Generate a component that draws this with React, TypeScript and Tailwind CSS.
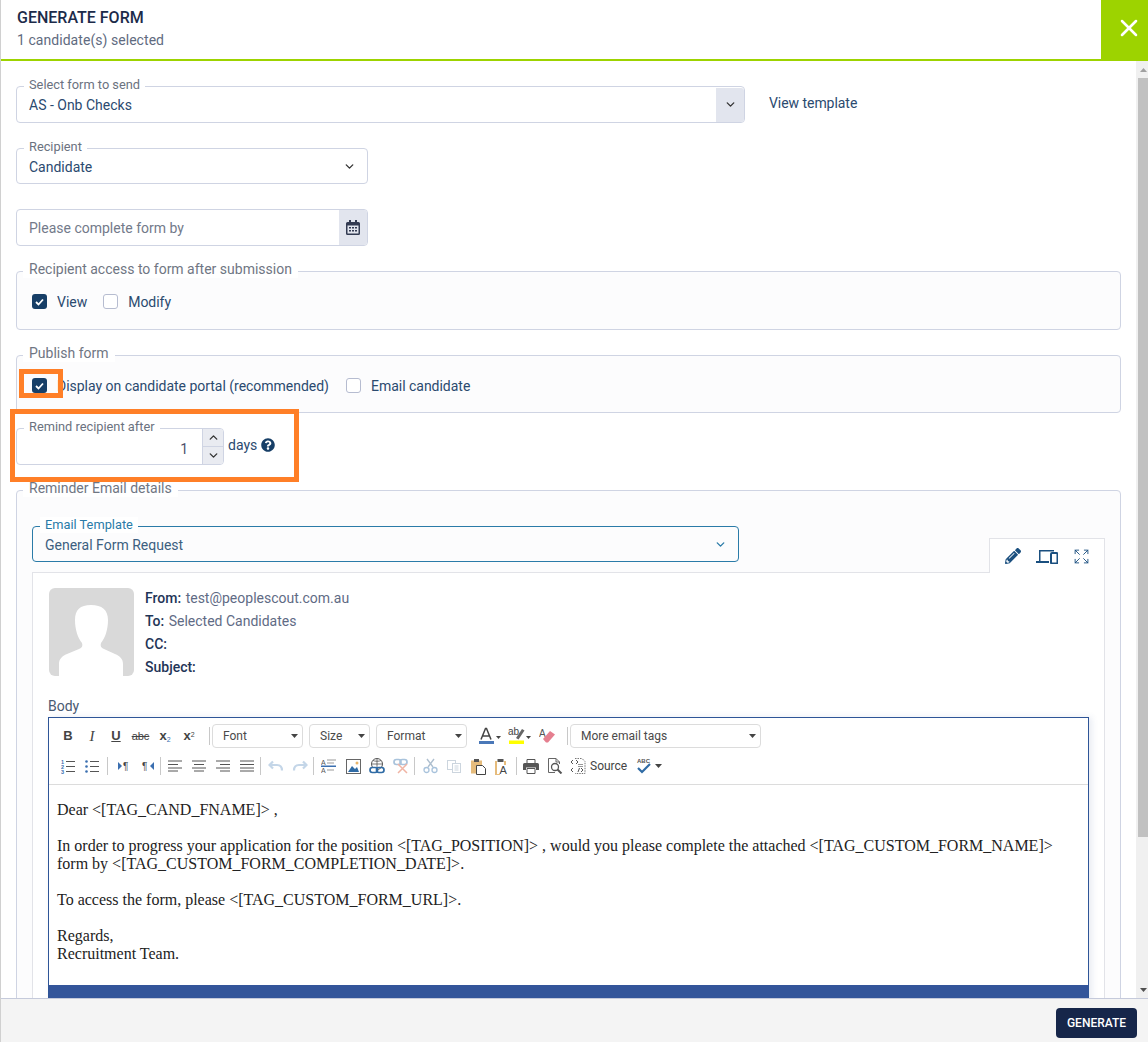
import React from "react";
import { ChevronDown, ChevronUp, X, Expand } from "lucide-react";
import { FaPencilAlt, FaQuestionCircle } from "react-icons/fa";

const Caret = () => (
  <svg width="7" height="4" viewBox="0 0 7 4" className="shrink-0"><path d="M0 0h7L3.5 4z" fill="#444" /></svg>
);

const Ic = ({ children, w = 16, h = 16 }: { children: React.ReactNode; w?: number; h?: number }) => (
  <svg width={w} height={h} viewBox={`0 0 ${w} ${h}`} className="block">{children}</svg>
);

const Sep = () => <div className="w-px h-[18px] bg-[#c8c8c8] shrink-0" />;

const Combo = ({ label, w }: { label: string; w: string }) => (
  <div className={`${w} h-[24px] shrink-0 border border-[#dcdcdc] rounded-[4px] flex items-center justify-between pl-[10px] pr-[4px] text-[12px] text-[#4a4a4a]`}>
    <span>{label}</span>
    <Caret />
  </div>
);

const Btn = ({ children, w = "w-[24px]" }: { children: React.ReactNode; w?: string }) => (
  <div className={`${w} h-[24px] shrink-0 flex items-center justify-center`}>{children}</div>
);

const Lines = ({ kind }: { kind: "l" | "c" | "r" | "j" }) => {
  const s = { l: [0, 14, 0, 10, 0, 14, 0, 10], c: [0, 14, 2, 12, 0, 14, 2, 12], r: [0, 14, 4, 14, 0, 14, 4, 14], j: [0, 14, 0, 14, 0, 14, 0, 14] }[kind];
  return (
    <Ic w={14} h={12}>
      {[1, 4.5, 8, 11].map((y, i) => (
        <path key={i} d={`M${s[i * 2]} ${y}H${s[i * 2 + 1]}`} stroke="#555" strokeWidth="1" />
      ))}
    </Ic>
  );
};

const Toolbar = () => (
  <div className="border-b border-[#dcdcdc] h-[67px] pl-[7px] pt-[6px] font-['Roboto',sans-serif]">
    <div className="flex items-center h-[24px]">
      <Btn><span className="font-['Liberation_Sans',sans-serif] font-bold text-[13px] text-[#444]">B</span></Btn>
      <Btn><span className="font-['Liberation_Serif',serif] italic text-[15px] text-[#444]">I</span></Btn>
      <Btn><span className="font-['Liberation_Sans',sans-serif] underline text-[13px] font-bold text-[#444]">U</span></Btn>
      <Btn w="w-[25px]"><span className="font-['Liberation_Sans',sans-serif] line-through text-[11px] text-[#444]">abc</span></Btn>
      <Btn><span className="font-['Liberation_Sans',sans-serif] font-bold text-[13px] text-[#444]">x<sub className="text-[7px] font-normal text-[#3b6fb0]">2</sub></span></Btn>
      <Btn><span className="font-['Liberation_Sans',sans-serif] font-bold text-[13px] text-[#444]">x<sup className="text-[7px] font-normal text-[#444]">2</sup></span></Btn>
      <div className="w-[8px]" />
      <Sep />
      <div className="w-[2px]" />
      <Combo label="Font" w="w-[91px]" />
      <div className="w-[6px]" />
      <Combo label="Size" w="w-[61px]" />
      <div className="w-[6px]" />
      <Combo label="Format" w="w-[91px]" />
      <div className="w-[10px]" />
      <Btn w="w-[26px]">
        <Ic w={24} h={18}>
          <path d="M3 12.500 7.500 1.500h1L13 12.500M4.800 9h6.400" stroke="#444" strokeWidth="1.500" fill="none" />
          <rect x="1" y="14" width="15" height="3" fill="#4a78b8" />
          <path d="M18 9h5l-2.500 3z" fill="#444" />
        </Ic>
      </Btn>
      <div className="w-[3px]" />
      <Btn w="w-[27px]">
        <Ic w={24} h={18}>
          <text x="0" y="8" fontSize="10" fill="#444" fontFamily="Liberation Sans">ab</text>
          <path d="M8 11 14 2l2.500 1.500-6 9z" fill="#666" />
          <rect x="1" y="13.500" width="15" height="3.500" fill="#ffff00" />
          <path d="M18 9h5l-2.500 3z" fill="#444" />
        </Ic>
      </Btn>
      <Btn w="w-[28px]">
        <Ic w={16} h={16}>
          <text x="0" y="9" fontSize="10" fill="#555" fontFamily="Liberation Sans">A</text>
          <path d="M4 11 11 3l5 3.500-7 8H7z" fill="#e57f8f" />
        </Ic>
      </Btn>
      <div className="w-[6px]" />
      <Sep />
      <div className="w-[2px]" />
      <Combo label="More email tags" w="w-[191px]" />
    </div>
    <div className="flex items-center h-[24px] mt-[6px]">
      <Btn>
        <Ic w={14} h={15}>
          <text x="0" y="4.500" fontSize="5.500" fontWeight="700" fill="#3b6fb0" fontFamily="Liberation Sans">1</text>
          <text x="0" y="9.500" fontSize="5.500" fontWeight="700" fill="#3b6fb0" fontFamily="Liberation Sans">2</text>
          <text x="0" y="14.500" fontSize="5.500" fontWeight="700" fill="#3b6fb0" fontFamily="Liberation Sans">3</text>
          <path d="M5 2.500h9M5 7.500h9M5 12.500h9" stroke="#555" />
        </Ic>
      </Btn>
      <Btn>
        <Ic w={14} h={15}>
          <circle cx="1.500" cy="2.500" r="1.300" fill="#3b6fb0" /><circle cx="1.500" cy="7.500" r="1.300" fill="#3b6fb0" /><circle cx="1.500" cy="12.500" r="1.300" fill="#3b6fb0" />
          <path d="M5 2.500h9M5 7.500h9M5 12.500h9" stroke="#555" />
        </Ic>
      </Btn>
      <div className="w-[3px]" />
      <Sep />
      <div className="w-[4px]" />
      <Btn>
        <Ic w={14} h={12}>
          <path d="M1 2l4 4-4 4z" fill="#3b6fb0" />
          <text x="6" y="10" fontSize="10" fill="#444" fontFamily="Liberation Sans">¶</text>
        </Ic>
      </Btn>
      <Btn>
        <Ic w={14} h={12}>
          <text x="1" y="10" fontSize="10" fill="#444" fontFamily="Liberation Sans">¶</text>
          <path d="M13 2 9 6l4 4z" fill="#3b6fb0" />
        </Ic>
      </Btn>
      <Sep />
      <div className="w-[2px]" />
      <Btn><Lines kind="l" /></Btn>
      <Btn><Lines kind="c" /></Btn>
      <Btn><Lines kind="r" /></Btn>
      <Btn><Lines kind="j" /></Btn>
      <div className="w-[1px]" />
      <Sep />
      <div className="w-[3px]" />
      <Btn>
        <Ic w={16} h={14}>
          <path d="M5 2.500 1.500 6 5 9.500M2 6h7c3 0 5 2 5 5.500" stroke="#c4d6e8" strokeWidth="2.200" fill="none" />
        </Ic>
      </Btn>
      <Btn>
        <Ic w={16} h={14}>
          <path d="M11 2.500 14.500 6 11 9.500M14 6H7c-3 0-5 2-5 5.500" stroke="#c4d6e8" strokeWidth="2.200" fill="none" />
        </Ic>
      </Btn>
      <div className="w-[1px]" />
      <Sep />
      <div className="w-[3px]" />
      <Btn>
        <Ic w={16} h={16}>
          <text x="0" y="6.500" fontSize="7" fill="#555" fontFamily="Liberation Sans">A</text>
          <text x="0" y="15" fontSize="7" fill="#555" fontFamily="Liberation Sans">A</text>
          <path d="M6 2h9M6 5h7M6 12h7" stroke="#999" />
          <rect x="0" y="7.500" width="15" height="1.500" fill="#3b6fb0" />
        </Ic>
      </Btn>
      <Btn>
        <Ic w={15} h={15}>
          <rect x=".5" y=".5" width="14" height="14" fill="#fff" stroke="#666" />
          <path d="M2 13l4-6 3 3 2-2 2 5z" fill="#2f6ba5" />
          <circle cx="11" cy="4" r="1.500" fill="#e8b56a" />
        </Ic>
      </Btn>
      <Btn>
        <Ic w={16} h={16}>
          <circle cx="8" cy="6" r="5.500" stroke="#555" fill="none" />
          <path d="M2.500 6h11M8 .5v11M4 2.500c2 1 6 1 8 0" stroke="#555" strokeWidth=".8" fill="none" />
          <rect x="1" y="9.500" width="7.500" height="5" rx="2.400" stroke="#2f6ba5" strokeWidth="1.700" fill="#fff" />
          <rect x="7.500" y="9.500" width="7.500" height="5" rx="2.400" stroke="#2f6ba5" strokeWidth="1.700" fill="none" />
        </Ic>
      </Btn>
      <Btn>
        <Ic w={16} h={16}>
          <rect x="1" y="1.500" width="7" height="5" rx="2.400" stroke="#a9c3dc" strokeWidth="1.700" fill="none" />
          <rect x="7" y="1.500" width="7" height="5" rx="2.400" stroke="#a9c3dc" strokeWidth="1.700" fill="none" />
          <path d="M5 6l9 9M14 6l-9 9" stroke="#f0b4a4" strokeWidth="1.500" />
        </Ic>
      </Btn>
      <div className="w-[1px]" />
      <Sep />
      <div className="w-[3px]" />
      <Btn>
        <Ic w={15} h={16}>
          <path d="M4 1l6 8M11 1 5 9" stroke="#aebfcf" strokeWidth="1.400" />
          <circle cx="3.500" cy="12" r="2.500" stroke="#a9c3dc" strokeWidth="1.300" fill="none" />
          <circle cx="11.500" cy="12" r="2.500" stroke="#a9c3dc" strokeWidth="1.300" fill="none" />
        </Ic>
      </Btn>
      <Btn>
        <Ic w={15} h={15}>
          <rect x=".5" y="1.500" width="8" height="9" fill="#fff" stroke="#ccd5de" />
          <rect x="5.500" y="4.500" width="8" height="9" fill="#fff" stroke="#ccd5de" />
          <path d="M7.500 7h4M7.500 9h4M7.500 11h4" stroke="#ccd5de" />
        </Ic>
      </Btn>
      <Btn>
        <Ic w={16} h={17}>
          <rect x="1" y="2.500" width="11" height="13" fill="#e6bc7c" />
          <rect x="4" y="1" width="5" height="3" fill="#555" />
          <path d="M6.500 7.500h6l3 3v6h-9z" fill="#fff" stroke="#444" />
        </Ic>
      </Btn>
      <Btn>
        <Ic w={16} h={17}>
          <path d="M1 3h2v13h3v1H1zM10 3h2v4h-2z" fill="#e6bc7c" />
          <rect x="3.500" y="1" width="6" height="3" fill="#555" />
          <text x="5.500" y="16" fontSize="11" fill="#444" fontFamily="Liberation Sans">A</text>
        </Ic>
      </Btn>
      <div className="w-[2px]" />
      <Sep />
      <div className="w-[2px]" />
      <Btn>
        <Ic w={16} h={15}>
          <path d="M4 .5h8v5H4z" fill="#fff" stroke="#555" />
          <path d="M1.500 4h13A1.500 1.500 0 0 1 16 5.500V11h-3V8.500H3V11H0V5.500A1.500 1.500 0 0 1 1.500 4z" fill="#555" />
          <path d="M4 9.500h8v5H4z" fill="#fff" stroke="#555" />
        </Ic>
      </Btn>
      <Btn>
        <Ic w={16} h={16}>
          <path d="M9 .5H1.500v14H8M9 .5l3.500 3.500v2M9 .5V4h3.500" stroke="#666" fill="none" />
          <circle cx="8" cy="9" r="3.500" stroke="#555" strokeWidth="1.300" fill="#fff" />
          <path d="M10.500 11.500l4 4" stroke="#555" strokeWidth="2" />
        </Ic>
      </Btn>
      <div className="flex items-center text-[12px] text-[#444] ml-[3px]">
        <Ic w={17} h={16}>
          <path d="M5 .5h7l3 3v12H5" stroke="#777" strokeDasharray="1.500 1" fill="none" />
          <path d="M3 2 1 4l2 2M6 2l2 2-2 2M3 10l-2 2 2 2M11 10l2 2-2 2M8 14l1.500-4" stroke="#555" fill="none" />
          <path d="M8 6.500h5M8 8.500h5" stroke="#999" />
        </Ic>
        <span className="ml-[3px]">Source</span>
      </div>
      <div className="w-[9px]" />
      <div className="flex items-center gap-[2px]">
        <Ic w={17} h={16}>
          <text x="1" y="5" fontSize="6" fontWeight="700" fill="#555" fontFamily="Liberation Sans">ABC</text>
          <path d="M2 10l4 4 8-8" stroke="#2f6ba5" strokeWidth="2.200" fill="none" />
        </Ic>
        <Caret />
      </div>
    </div>
  </div>
);

const Float = ({ label, blue }: { label: string; blue?: boolean }) => (
  <span className={`absolute left-[7px] -top-[10px] px-[5px] leading-[16px] text-[12.800px] bg-white ${blue ? "text-[#2a7ba8]" : "text-[#6b7280]"}`}>{label}</span>
);

const Check = ({ on, label }: { on?: boolean; label: string }) => (
  <div className="flex items-center gap-[10px]">
    <div className={`w-[15px] h-[15px] -mt-[2px] rounded-[3px] flex items-center justify-center ${on ? "bg-[#173f67]" : "border border-[#b6bcd0] bg-white"}`}>
      {on && (
        <svg width="9" height="8" viewBox="0 0 9 8"><path d="M1 4l2.500 2.500L8 1.500" stroke="#fff" strokeWidth="1.800" fill="none" /></svg>
      )}
    </div>
    <span className="tracking-[-0.02px]">{label}</span>
  </div>
);

const Field = ({ title, children, cls }: { title: string; children: React.ReactNode; cls: string }) => (
  <fieldset className={`border border-[#cfd4e3] rounded-[4px] bg-[#fcfcfd] ${cls}`}>
    <legend className="relative -top-[2px] -ml-[9px] px-[6px] bg-white text-[14px] leading-[18px] text-[#6f7683] -mb-[2px]">{title}</legend>
    {children}
  </fieldset>
);

export default function App() {
  return (
    <div className="w-[1148px] h-[1042px] relative overflow-hidden bg-white flex flex-col border-l border-[#d0d0d0] font-['Roboto',sans-serif] text-[14px] text-[#2b4a6f]">
      <header className="h-[61px] shrink-0 flex border-b-2 border-[#9dd300] pl-[16px]">
        <div className="flex-1 pt-[8px]">
          <div className="text-[16px] leading-[20px] font-medium text-[#1c2b4a]">GENERATE FORM</div>
          <div className="text-[14px] leading-[20px] mt-[2px] tracking-[0.05px] text-[#5f6b80]">1 candidate(s) selected</div>
        </div>
        <div className="w-[47px] h-[59px] bg-[#9dd300] flex items-center justify-end pr-[5px] pb-[4px] text-white">
          <X size={28} strokeWidth={2.200} />
        </div>
      </header>

      <div className="flex flex-1 min-h-0">
        <main className="flex-1 min-w-0 overflow-hidden pl-[15px] pr-[15px] pt-[25px]">
          <div className="flex items-center">
            <div className="relative w-[729px] h-[37px] border border-[#cfd4e3] rounded-[4px] flex items-center pl-[12px] pt-[1px]">
              <Float label="Select form to send" />
              <span className="flex-1">AS - Onb Checks</span>
              <div className="w-[28px] h-full bg-[#e2e5ee] flex items-center justify-center rounded-r-[3px] -mt-[1px]">
                <ChevronDown size={13} strokeWidth={2.500} className="text-[#333]" />
              </div>
            </div>
            <span className="ml-[24px] -mt-[3px] tracking-[-0.05px]">View template</span>
          </div>

          <div className="relative w-[352px] h-[36px] mt-[25px] border border-[#cfd4e3] rounded-[4px] flex items-center justify-between pl-[12px] pr-[11px]">
            <Float label="Recipient" />
            <span className="pt-[2px]">Candidate</span>
            <ChevronDown size={13} strokeWidth={2.500} className="text-[#333]" />
          </div>

          <div className="w-[352px] h-[37px] mt-[25px] border border-[#cfd4e3] rounded-[4px] flex items-center pl-[12px]">
            <span className="flex-1 pt-[2px] text-[#737a8a]">Please complete form by</span>
            <div className="w-[28px] h-full bg-[#e2e5ee] flex items-center justify-center rounded-r-[3px]">
              <svg width="14" height="15" viewBox="0 0 14 15">
                <path d="M3 0h2v2h4V0h2v2h1.500A1.500 1.500 0 0 1 14 3.500v10a1.500 1.500 0 0 1-1.500 1.500h-11A1.500 1.500 0 0 1 0 13.500v-10A1.500 1.500 0 0 1 1.500 2H3z" fill="#333b52" />
                <rect x="1.500" y="5.500" width="11" height="8" fill="#e2e5ee" />
                <path d="M3 7h2v1.500H3zM6 7h2v1.500H6zM9 7h2v1.500H9zM3 10h2v1.500H3zM6 10h2v1.500H6zM9 10h2v1.500H9z" fill="#333b52" />
              </svg>
            </div>
          </div>

          <Field title="Recipient access to form after submission" cls="h-[68px] mt-[16px] pl-[15px] pt-[14px]">
            <div className="flex gap-[16px]">
              <Check on label="View" />
              <Check label="Modify" />
            </div>
          </Field>

          <Field title="Publish form" cls="h-[67px] mt-[16px] pl-[15px] pt-[14px]">
            <div className="flex gap-[17px]">
              <Check on label="Display on candidate portal (recommended)" />
              <Check label="Email candidate" />
            </div>
          </Field>

          <div className="flex items-center mt-[15px]">
            <div className="relative w-[208px] h-[37px] border border-[#cfd4e3] rounded-[4px] flex">
              <Float label="Remind recipient after" />
              <span className="flex-1 text-right pr-[14px] pt-[10px] leading-[20px] text-[#4d4f6b]">1</span>
              <div className="w-[21px] h-full flex flex-col bg-[#e9ebf1] border-l border-[#cfd4e3] rounded-r-[3px]">
                <div className="flex-1 flex items-center justify-center border-b border-[#cfd4e3]"><ChevronUp size={13} strokeWidth={2.500} className="text-[#333]" /></div>
                <div className="flex-1 flex items-center justify-center"><ChevronDown size={13} strokeWidth={2.500} className="text-[#333]" /></div>
              </div>
            </div>
            <span className="ml-[4px] -mt-[3px]">days</span>
            <FaQuestionCircle size={14} className="ml-[4px] -mt-[3px] text-[#173f67]" />
          </div>

          <Field title="Reminder Email details" cls="mt-[16px] h-[600px] pl-[15px] pr-[15px] pt-[29px]">
            <div className="flex items-start">
              <div className="relative w-[707px] h-[36px] border border-[#2a7ba8] rounded-[4px] flex items-center justify-between pl-[12px] pr-[11px] text-[#3d5f80]">
                <Float label="Email Template" blue />
                <span className="pt-[2px]">General Form Request</span>
                <ChevronDown size={13} strokeWidth={2.500} className="text-[#2a7ba8]" />
              </div>
              <div className="flex-1" />
              <div className="relative z-10 w-[116px] h-[35px] mt-[12px] border border-b-0 border-[#e2e3e8] bg-white flex items-center pl-[15px] gap-[15px] text-[#1a4f7f]">
                <FaPencilAlt size={16} />
                <svg width="22" height="15" viewBox="0 0 22 15">
                  <path d="M3 1h15v1.500H4.500V12H3zM0 12h13v2H0z" fill="#1a4f7f" />
                  <rect x="15" y="4" width="6.500" height="10.500" rx="1" fill="none" stroke="#1a4f7f" strokeWidth="2" />
                </svg>
                <Expand size={17} strokeWidth={1.300} />
              </div>
            </div>
            <div className="-mt-[1px] border border-[#e2e3e8] bg-white pl-[16px] pr-[15px] pt-[15px] h-[600px]">
              <div className="flex">
                <div className="w-[85px] h-[88px] rounded-[6px] bg-[#d9d9d9] overflow-hidden shrink-0">
                  <svg width="85" height="88" viewBox="0 0 85 88">
                    <path d="M10 88V76c0-5 3-8 8-10l12-5c3-1 4-3 3-6C29 50 26 42 26 32 26 22 31 17 42 17s17 5 17 15c0 10-3 18-7 23-1 3 0 5 3 6l11 5c5 2 8 5 8 10v12z" fill="#fff" />
                  </svg>
                </div>
                <div className="ml-[11px] leading-[23px] -mt-[1px]">
                  <div className="font-medium text-[#1f3557]">From: <span className="font-normal text-[#5f6b85] ml-[1px]">test@peoplescout.com.au</span></div>
                  <div className="font-medium text-[#1f3557]">To: <span className="font-normal text-[#5f6b85] ml-[1px]">Selected Candidates</span></div>
                  <div className="font-medium text-[#1f3557]">CC:</div>
                  <div className="font-medium text-[#1f3557]">Subject:</div>
                </div>
              </div>
              <div className="mt-[18px] -ml-[1px] leading-[18px] text-[#4a5a72]">Body</div>
              <div className="mt-[2px] -ml-[1px] border border-[#2f5597] border-b-0 h-[400px] bg-white shadow-[3px_0_6px_rgba(70,100,160,0.12)]">
                <Toolbar />
                <div className="h-[200px] pl-[8px] pr-[8px] pt-[16px] font-['Liberation_Serif',serif] text-[16px] leading-[18px] text-[#222]">
                  <p>Dear &lt;[TAG_CAND_FNAME]&gt; ,</p>
                  <p className="mt-[18px]">In order to progress your application for the position &lt;[TAG_POSITION]&gt; , would you please complete the attached &lt;[TAG_CUSTOM_FORM_NAME]&gt; form by &lt;[TAG_CUSTOM_FORM_COMPLETION_DATE]&gt;.</p>
                  <p className="mt-[18px]">To access the form, please &lt;[TAG_CUSTOM_FORM_URL]&gt;.</p>
                  <p className="mt-[18px]">Regards,<br />Recruitment Team.</p>
                </div>
                <div className="h-[40px] bg-[#33559a]" />
              </div>
            </div>
          </Field>
        </main>

        <aside className="w-[12px] shrink-0 bg-[#f0f0f0] flex flex-col justify-between">
          <div className="w-full">
            <div className="h-[17px] flex items-center justify-end pr-[1px]">
              <svg width="7" height="4" viewBox="0 0 7 4"><path d="M3.500 0 7 4H0z" fill="#a0a0a0" /></svg>
            </div>
            <div className="h-[759px] ml-[2px] bg-[#c1c1c1]" />
          </div>
          <div className="h-[17px] flex items-center justify-end pr-[1px]">
            <svg width="7" height="4" viewBox="0 0 7 4"><path d="M0 0h7L3.500 4z" fill="#505050" /></svg>
          </div>
        </aside>
      </div>

      <footer className="h-[44px] shrink-0 bg-[#f4f4f4] border-t border-[#c5cadb] flex items-start justify-end pt-[9px] pr-[11px] relative z-10">
        <button className="w-[81px] h-[30px] rounded-[4px] bg-[#16264a] text-white text-[12px] font-medium">GENERATE</button>
      </footer>

      <div className="absolute left-[18px] top-[369px] w-[44px] h-[29px] border-[5px] border-[#ff7f27]" />
      <div className="absolute left-[9px] top-[409px] w-[289px] h-[73px] border-[5px] border-[#ff7f27]" />
    </div>
  );
}
